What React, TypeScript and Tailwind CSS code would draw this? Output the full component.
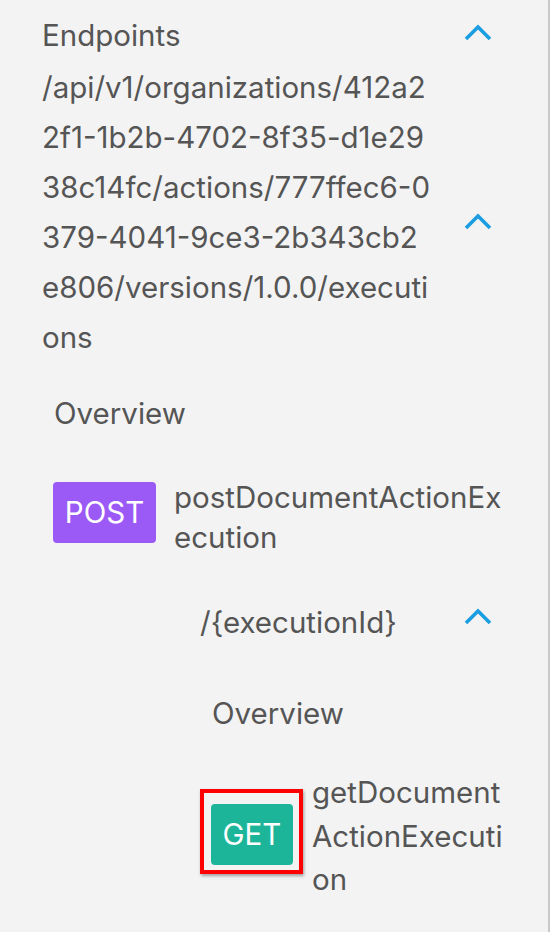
import React from "react";

function Chevron({ className = "" }: { className?: string }) {
  return (
    <svg
      width="30"
      height="18"
      viewBox="0 0 30 18"
      className={`shrink-0 ${className}`}
      fill="none"
    >
      <polyline
        points="3,15 15,3 27,15"
        stroke="#1b9de2"
        strokeWidth="3.6"
        strokeLinecap="butt"
        strokeLinejoin="miter"
      />
    </svg>
  );
}

function Lines({ lines }: { lines: string[] }) {
  return (
    <>
      {lines.map((l, i) => (
        <span key={i} className="block whitespace-nowrap">
          {l}
        </span>
      ))}
    </>
  );
}

export default function App() {
  return (
    <div
      className="w-[550px] h-[932px] overflow-hidden bg-[#f3f3f3] border-r-2 border-[#c9c9c9] pl-[42px] pr-[55px] pt-[10px] text-[29.5px] text-[#555555]"
      style={{ fontFamily: "Inter, Roboto, sans-serif" }}
    >
      {/* Endpoints header */}
      <div className="flex justify-between items-start h-[50px]">
        <span className="leading-[50px]">Endpoints</span>
        <Chevron className="mt-[14px]" />
      </div>

      {/* Path group */}
      <div className="flex justify-between items-start mt-[2px]">
        <div className="w-[398px] leading-[50px]">
          <Lines
            lines={[
              "/api/v1/organizations/412a2",
              "2f1-1b2b-4702-8f35-d1e29",
              "38c14fc/actions/777ffec6-0",
              "379-4041-9ce3-2b343cb2",
              "e806/versions/1.0.0/executi",
              "ons",
            ]}
          />
        </div>
        <Chevron className="mt-[151px]" />
      </div>

      <div className="ml-[12px] mt-[26px] leading-[50px]">Overview</div>

      {/* POST item */}
      <div className="flex items-start ml-[11px] mt-[39px]">
        <div className="mt-[5px] w-[103px] h-[61px] shrink-0 rounded-[4px] bg-[#9b59f6] text-white flex items-center justify-center leading-none">
          POST
        </div>
        <div className="ml-[18px] w-[338px] leading-[40px]">
          <Lines lines={["postDocumentActionEx", "ecution"]} />
        </div>
      </div>

      {/* /{executionId} group */}
      <div className="flex justify-between items-start ml-[158px] mt-[40px]">
        <span className="leading-[50px]">/{"{executionId}"}</span>
        <Chevron className="mt-[11px]" />
      </div>

      <div className="ml-[170px] mt-[41px] leading-[50px]">Overview</div>

      {/* GET item */}
      <div className="flex items-start ml-[158px] mt-[33px]">
        <div className="mt-[18px] shrink-0 border-4 border-[#ff0000] pt-[11px] pb-[5px] pl-[7px] pr-[6px] shadow-[1px_2px_3px_rgba(0,0,0,0.35)]">
          <div className="w-[82px] h-[61px] rounded-[4px] bg-[#1db599] text-white flex items-center justify-center leading-none">
            GET
          </div>
        </div>
        <div className="ml-[9px] w-[200px] leading-[43.5px]">
          <Lines lines={["getDocument", "ActionExecuti", "on"]} />
        </div>
      </div>
    </div>
  );
}
